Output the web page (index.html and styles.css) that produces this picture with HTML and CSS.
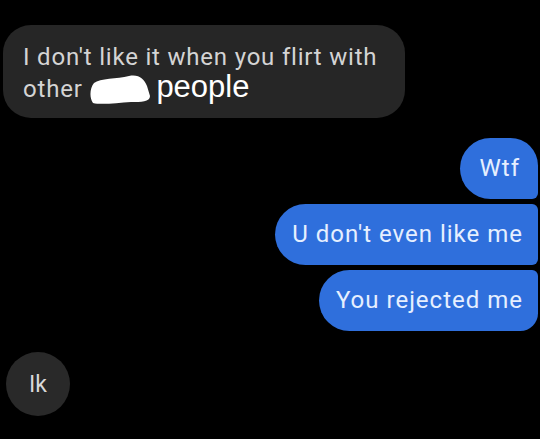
FILE: index.html
```html
<!DOCTYPE html>
<html>
<head>
<meta charset="utf-8">
<link rel="stylesheet" href="styles.css">
</head>
<body>
<div class="chat">
  <div class="bubble in">I don't like it when you flirt with<br>other <svg class="blob" width="62" height="30" viewBox="0 0 62 30"><path d="M5 8 C11 3 28 4 40 1 C50 -1 55 4 58 11 L61 21 C61 27 52 27 42 27 C28 28 12 30 4 28 C0 22 1 13 5 8 Z" fill="#fff"/></svg><span class="plain">people</span></div>
  <div class="outgroup">
    <div class="bubble out first">Wtf</div>
    <div class="bubble out mid">U don't even like me</div>
    <div class="bubble out last">You rejected me</div>
  </div>
  <div class="circle">Ik</div>
</div>
</body>
</html>
```
FILE: styles.css
```css
html, body {
  margin: 0;
  padding: 0;
  background: #000;
}
body {
  width: 540px;
  height: 439px;
  overflow: hidden;
  font-family: Roboto, "Noto Sans", sans-serif;
}
.chat {
  display: flex;
  flex-direction: column;
  padding-top: 25px;
}
.bubble.in {
  align-self: flex-start;
  margin-left: 3px;
  width: 402px;
  box-sizing: border-box;
  background: #262626;
  color: #d4d4d4;
  font-size: 24px;
  letter-spacing: 0.8px;
  line-height: 32px;
  padding: 16px 10px 13px 20px;
  border-radius: 28px;
  white-space: nowrap;
}
.blob {
  vertical-align: -8px;
  margin-left: 0;
  margin-right: 5px;
}
.plain {
  font-family: "Liberation Sans", Arial, sans-serif;
  font-size: 31px;
  letter-spacing: 0;
  line-height: 20px;
  color: #fff;
}
.outgroup {
  display: flex;
  flex-direction: column;
  align-items: flex-end;
  gap: 5px;
  margin-top: 20px;
  margin-right: 2px;
}
.bubble.out {
  background: #2f6fdc;
  color: #e6efff;
  font-size: 24px;
  letter-spacing: 1px;
  line-height: 29px;
  padding: 16px 15px 16px 17px;
  border-radius: 31px 6px 6px 31px;
}
.bubble.out.first {
  border-top-right-radius: 28px;
  padding-left: 20px;
  padding-right: 18px;
}
.bubble.out.last {
  border-bottom-right-radius: 18px;
}
.circle {
  margin-top: 21px;
  margin-left: 6px;
  width: 64px;
  height: 64px;
  border-radius: 50%;
  background: #292929;
  color: #d8d8d8;
  font-size: 23px;
  display: flex;
  align-items: center;
  justify-content: center;
}
```
